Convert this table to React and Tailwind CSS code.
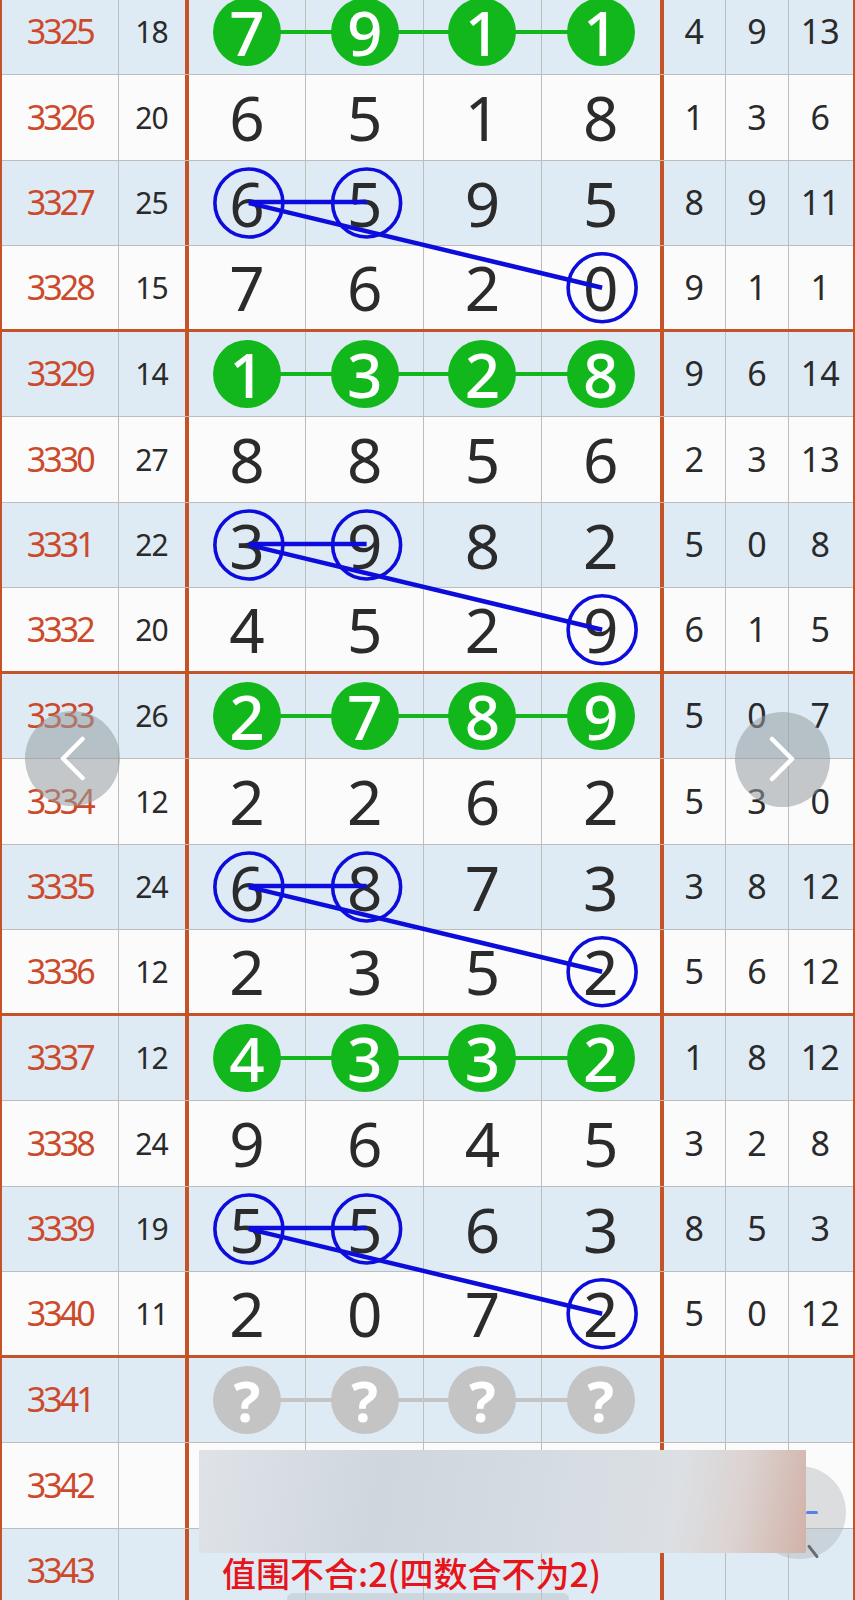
import React from "react";

const GREEN = "#12b81b";
const BLUE = "#0c0cdc";

const ROWS = [
  { id: 3325, s: 18, d: [7, 9, 1, 1], r: [4, 9, 13] },
  { id: 3326, s: 20, d: [6, 5, 1, 8], r: [1, 3, 6] },
  { id: 3327, s: 25, d: [6, 5, 9, 5], r: [8, 9, 11] },
  { id: 3328, s: 15, d: [7, 6, 2, 0], r: [9, 1, 1] },
  { id: 3329, s: 14, d: [1, 3, 2, 8], r: [9, 6, 14] },
  { id: 3330, s: 27, d: [8, 8, 5, 6], r: [2, 3, 13] },
  { id: 3331, s: 22, d: [3, 9, 8, 2], r: [5, 0, 8] },
  { id: 3332, s: 20, d: [4, 5, 2, 9], r: [6, 1, 5] },
  { id: 3333, s: 26, d: [2, 7, 8, 9], r: [5, 0, 7] },
  { id: 3334, s: 12, d: [2, 2, 6, 2], r: [5, 3, 0] },
  { id: 3335, s: 24, d: [6, 8, 7, 3], r: [3, 8, 12] },
  { id: 3336, s: 12, d: [2, 3, 5, 2], r: [5, 6, 12] },
  { id: 3337, s: 12, d: [4, 3, 3, 2], r: [1, 8, 12] },
  { id: 3338, s: 24, d: [9, 6, 4, 5], r: [3, 2, 8] },
  { id: 3339, s: 19, d: [5, 5, 6, 3], r: [8, 5, 3] },
  { id: 3340, s: 11, d: [2, 0, 7, 2], r: [5, 0, 12] },
  { id: 3341, s: null, d: ["?", "?", "?", "?"], r: [] },
  { id: 3342, s: null, d: [], r: [] },
  { id: 3343, s: null, d: [], r: [] },
];

const ROW_H = 85.5;
// digit column centres, measured from the group's inner left edge
const colX = (k) => 188 + 117.75 * (k + 0.5);

function Ball({ v, kind }) {
  const bg = kind === "green" ? "bg-[#12b81b]" : "bg-[#c4c4c4]";
  return (
    <div className={`relative z-10 flex h-[68px] w-[68px] items-center justify-center rounded-full ${bg}`}>
      <span className={`leading-none text-white ${kind === "green" ? "text-[62px] font-medium" : "text-[56px] font-bold"}`}>{v}</span>
    </div>
  );
}

function Row({ row, idx, lastInGroup }) {
  const stripe = idx % 2 === 0 ? "bg-[#deebf5]" : "bg-[#fbfbfb]";
  const bottom = lastInGroup ? "border-b-[3px] border-[#c45328]" : "border-b-[1.5px] border-[#bdbdbd]";
  const kind = row.d[0] === "?" ? "gray" : idx % 4 === 0 ? "green" : null;

  return (
    <div className={`flex h-[85.5px] ${stripe} ${bottom}`}>
      <div className="flex w-[116.5px] items-center justify-center border-r-[1.5px] border-[#bdbdbd] text-[34px] tracking-[-3px] text-[#cc4a2b]">
        {row.id}
      </div>
      <div className="flex w-[66px] items-center justify-center text-[30px] tracking-[-1px] text-[#2a2a2a]">
        {row.s}
      </div>
      <div className="relative flex w-[479px] border-x-4 border-[#c45328]">
        {kind && (
          <div
            className={`absolute left-[58.875px] right-[58.875px] top-1/2 h-[4px] -translate-y-1/2 ${kind === "green" ? "bg-[#12b81b]" : "bg-[#c4c4c4]"}`}
          />
        )}
        {[0, 1, 2, 3].map((k) => (
          <div
            key={k}
            className={`flex w-[117.75px] items-center justify-center ${k < 3 ? "border-r-[1.5px] border-[#bdbdbd]" : ""}`}
          >
            {row.d[k] !== undefined &&
              (kind ? (
                <Ball v={row.d[k]} kind={kind} />
              ) : (
                <span className="text-[62px] leading-none text-[#2b2b2b]">{row.d[k]}</span>
              ))}
          </div>
        ))}
      </div>
      <div className="flex w-[188px]">
        {[0, 1, 2].map((k) => (
          <div
            key={k}
            className={`flex w-[62.67px] items-center justify-center text-[34px] text-[#2a2a2a] ${k < 2 ? "border-r-[1.5px] border-[#bdbdbd]" : ""}`}
          >
            {row.r[k]}
          </div>
        ))}
      </div>
    </div>
  );
}

function BlueMarks() {
  const y2 = 2 * ROW_H + 42;
  const y3 = 3 * ROW_H + 41.25;
  return (
    <svg className="pointer-events-none absolute left-0 top-0 z-20" width="851" height="342">
      <circle cx={colX(0)} cy={y2} r="34" fill="none" stroke={BLUE} strokeWidth="3.6" />
      <circle cx={colX(1)} cy={y2} r="34" fill="none" stroke={BLUE} strokeWidth="3.6" />
      <circle cx={colX(3)} cy={y3} r="34" fill="none" stroke={BLUE} strokeWidth="3.6" />
      <line x1={colX(0)} y1={y2 - 1} x2={colX(1)} y2={y2 - 1} stroke={BLUE} strokeWidth="4.5" />
      <line x1={colX(0)} y1={y2} x2={colX(3)} y2={y3} stroke={BLUE} strokeWidth="4.5" />
    </svg>
  );
}

function NavButton({ dir, className }) {
  return (
    <div className={`absolute z-30 h-[95px] w-[95px] rounded-full bg-[rgba(150,156,160,0.55)] ${className}`}>
      <svg width="95" height="95" className="absolute left-0 top-0">
        {dir === "left" ? (
          <polyline points="57.5,28 38,47.5 57.5,67" fill="none" stroke="#fff" strokeWidth="4.5" strokeLinecap="round" strokeLinejoin="round" />
        ) : (
          <polyline points="37,27 57,47 37,67" fill="none" stroke="#fff" strokeWidth="4.5" strokeLinecap="round" strokeLinejoin="round" />
        )}
      </svg>
    </div>
  );
}

export default function App() {
  const groups = [];
  for (let i = 0; i < ROWS.length; i += 4) groups.push(ROWS.slice(i, i + 4));

  return (
    <div className="relative h-[1600px] w-[855px] overflow-hidden bg-[#fbfbfb] font-['Noto_Sans',sans-serif]">
      <div className="-mt-[10.5px] w-[855px] border-x-2 border-[#c45328]">
        {groups.map((g, gi) => (
          <div key={gi} className="relative">
            {g.map((row, ri) => (
              <Row key={row.id} row={row} idx={gi * 4 + ri} lastInGroup={ri === 3} />
            ))}
            {g.length === 4 && <BlueMarks />}
          </div>
        ))}
      </div>

      <NavButton dir="left" className="left-[25px] top-[711px]" />
      <NavButton dir="right" className="left-[735px] top-[712px]" />

      {/* floating search-like button, mostly hidden by the banner */}
      <div className="absolute left-[753px] top-[1466px] z-30 h-[93px] w-[93px] rounded-full bg-[rgba(175,178,182,0.42)]">
        <div className="absolute left-[53px] top-[45px] h-[3px] w-[12px] rounded-full bg-[#5a7fe6]" />
        <div className="absolute left-[52px] top-[84px] h-[3px] w-[16px] rotate-[52deg] rounded-full bg-[#6b6b6b]" />
      </div>

      {/* blurred banner */}
      <div className="absolute left-[199px] top-[1450px] z-40 h-[103px] w-[607px] bg-[linear-gradient(100deg,#dfe3e8_0%,#cfd6de_30%,#d4dce3_55%,#dcdfe3_78%,#dcd3d1_88%,#d1b2a8_100%)]" />

      <div className="absolute left-[222px] top-[1553px] z-40 whitespace-nowrap font-['Noto_Sans_CJK_SC',sans-serif] text-[34px] font-medium leading-[40px] text-[#e6141b]">
        值围不合:2(四数合不为2)
      </div>

      <div className="absolute left-[287px] top-[1593px] z-40 h-[12px] w-[282px] rounded-full bg-[rgba(190,196,202,0.55)]" />
    </div>
  );
}
